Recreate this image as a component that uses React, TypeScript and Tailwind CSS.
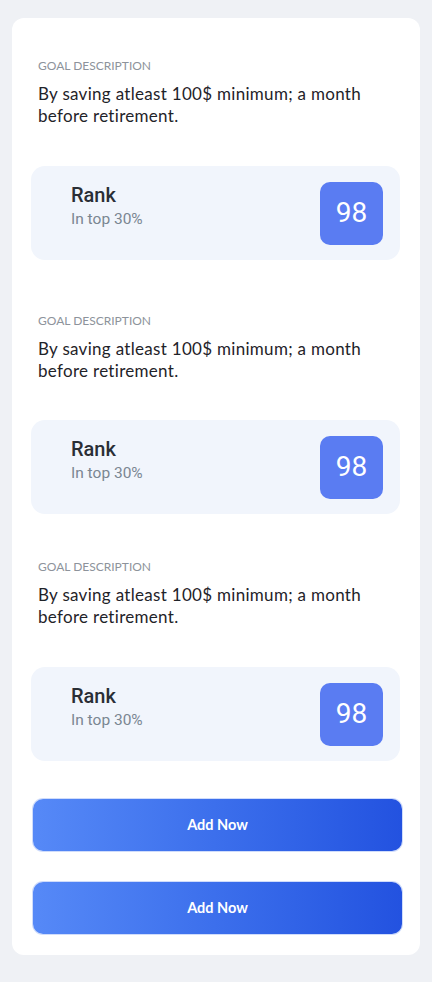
const goals = [
  { gap: 'mt-0', rankGap: 'mt-[39px]' },
  { gap: 'mt-[54px]', rankGap: 'mt-[38px]' },
  { gap: 'mt-[46px]', rankGap: 'mt-[39px]' },
];

const RankCard = () => (
  <div className="h-[94px] rounded-[14px] bg-[#f1f5fc] flex items-center justify-between pl-[40px] pr-[17px]">
    <div className="flex flex-col -mt-[14px] font-[family-name:Roboto]">
      <span className="text-[20px] leading-[24px] font-medium text-[#2a2e35]">Rank</span>
      <span className="text-[15.5px] leading-[20px] mt-[2px] text-[#7a8692]">In top 30%</span>
    </div>
    <div className="w-[63px] h-[63px] rounded-[10px] bg-[#5a7cf2] flex items-center justify-center">
      <span className="font-[family-name:Roboto] text-[28px] text-white">98</span>
    </div>
  </div>
);

const AddButton = ({ className = '' }: { className?: string }) => (
  <button
    className={`w-full h-[52px] rounded-[10px] bg-gradient-to-r from-[#5689f7] to-[#2352e0] text-white text-[14.5px] font-bold font-[family-name:Lato] shadow-[0_0_0_1px_#cfdcfb] ${className}`}
  >
    Add Now
  </button>
);

export default function App() {
  return (
    <div className="min-h-[982px] bg-[#eff1f5] pt-[18px] pb-[28px] px-3">
      <div className="bg-white rounded-[12px] pt-[41px] pb-[21px] pl-[19px] pr-[20px] font-[family-name:Lato]">
        {goals.map((g, i) => (
          <div key={i} className={g.gap}>
            <div className="pl-[7px]">
              <p className="text-[12px] leading-[14px] uppercase text-[#8d939b]">Goal description</p>
              <p className="mt-[10px] max-w-[340px] text-[17px] leading-[22px] tracking-[0.3px] text-[#1f2329]">
                By saving atleast 100$ minimum; a month before retirement.
              </p>
            </div>
            <div className={g.rankGap}>
              <RankCard />
            </div>
          </div>
        ))}
        <div className="mt-[38px] ml-[2px] -mr-[2px]">
          <AddButton />
          <AddButton className="mt-[31px]" />
        </div>
      </div>
    </div>
  );
}
